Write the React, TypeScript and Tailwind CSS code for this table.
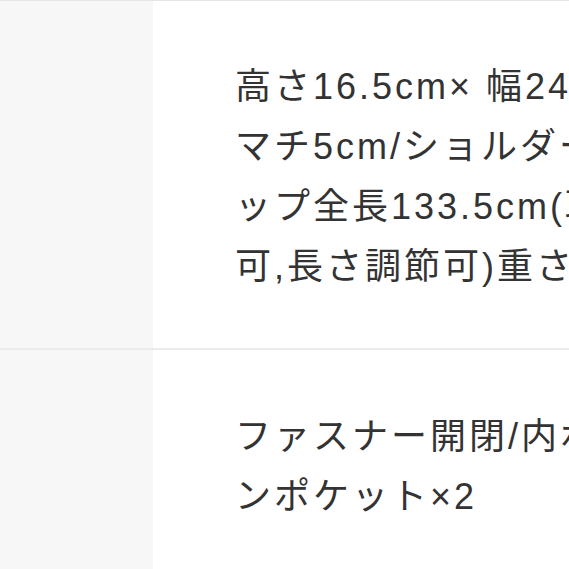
export default function App() {
  const rows = [
    {
      lines: [
        "高さ16.5cm× 幅24cm× ",
        "マチ5cm/ショルダーストラ",
        "ップ全長133.5cm(取り外し",
        "可,長さ調節可)重さ約350g",
      ],
    },
    {
      lines: ["ファスナー開閉/内ポケット×1/オープ", "ンポケット×2"],
    },
  ];

  return (
    <main className="w-[569px] h-[569px] overflow-hidden bg-white border-t border-[#e6e6e6] font-['Liberation_Sans','Noto_Sans_CJK_JP',sans-serif]">
      {rows.map((row, i) => (
        <div
          key={i}
          className={
            i === 0
              ? "flex border-b-2 border-[#ebebeb]"
              : "flex"
          }
        >
          <div className="w-[153px] shrink-0 bg-[#f7f7f7]" />
          <div
            className={
              i === 0
                ? "flex-1 pl-[82px] pt-[56px] pb-[51px] text-[36px] leading-[60px] tracking-[3px] text-[#333333] whitespace-nowrap"
                : "flex-1 pl-[82px] pt-[57px] pb-[60px] text-[36px] leading-[60px] tracking-[3px] text-[#333333] whitespace-nowrap"
            }
          >
            {row.lines.map((line, j) => (
              <div key={j}>{line}</div>
            ))}
          </div>
        </div>
      ))}
    </main>
  );
}
